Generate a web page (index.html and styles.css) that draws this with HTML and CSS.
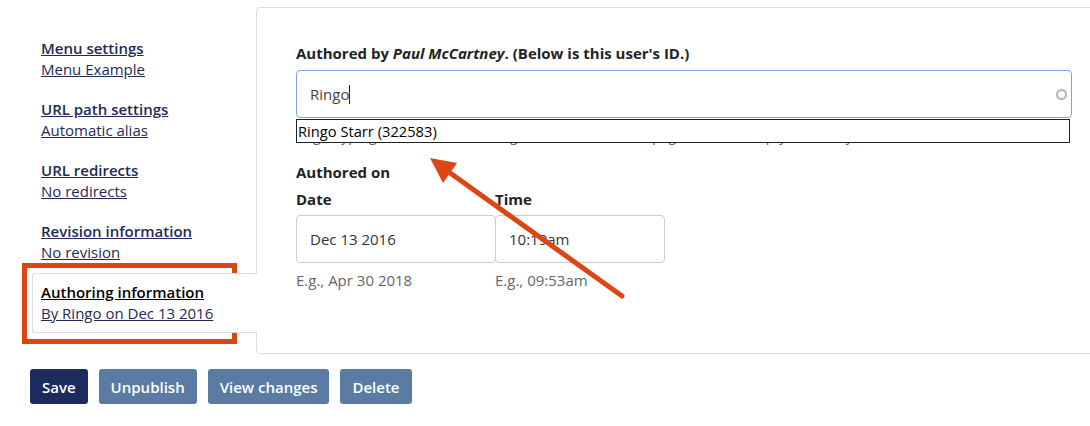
FILE: index.html
```html
<!DOCTYPE html>
<html lang="en">
<head>
    <meta charset="UTF-8">
    <title>Edit content - Authoring information</title>
    <link rel="stylesheet" href="styles.css">
</head>
<body>
    <div class="page">
        <div class="edit-layout">
            <!-- vertical tabs -->
            <ul class="vertical-tabs">
                <li class="tab">
                    <a class="tab-title" href="#">Menu settings</a>
                    <a class="tab-summary" href="#">Menu Example</a>
                </li>
                <li class="tab">
                    <a class="tab-title" href="#">URL path settings</a>
                    <a class="tab-summary" href="#">Automatic alias</a>
                </li>
                <li class="tab">
                    <a class="tab-title" href="#">URL redirects</a>
                    <a class="tab-summary" href="#">No redirects</a>
                </li>
                <li class="tab">
                    <a class="tab-title" href="#">Revision information</a>
                    <a class="tab-summary" href="#">No revision</a>
                </li>
                <li class="tab active">
                    <a class="tab-title" href="#">Authoring information</a>
                    <a class="tab-summary" href="#">By Ringo on Dec 13 2016</a>
                </li>
            </ul>

            <!-- tab pane -->
            <div class="panel">
                <div class="form-item">
                    <label class="form-label">Authored by <em>Paul McCartney</em>. (Below is this user's ID.)</label>
                    <div class="autocomplete-wrap">
                        <div class="text-input focused">
                            <span>Ringo</span><span class="caret"></span>
                            <span class="throbber"></span>
                        </div>
                        <div class="autocomplete">Ringo Starr (322583)</div>
                    </div>
                    <div class="description">Begin typing a username to change who authored this page. Leave it empty for anonymous.</div>
                </div>

                <div class="form-item">
                    <div class="legend">Authored on</div>
                    <div class="datetime">
                        <div class="datetime-part date-part">
                            <label class="form-label">Date</label>
                            <div class="text-input">Dec 13 2016</div>
                            <div class="example">E.g., Apr 30 2018</div>
                        </div>
                        <div class="datetime-part time-part">
                            <label class="form-label">Time</label>
                            <div class="text-input">10:19am</div>
                            <div class="example">E.g., 09:53am</div>
                        </div>
                    </div>
                </div>
            </div>
        </div>

        <div class="form-actions">
            <button class="btn primary">Save</button>
            <button class="btn">Unpublish</button>
            <button class="btn">View changes</button>
            <button class="btn">Delete</button>
        </div>

        <!-- annotation -->
        <div class="highlight-box"></div>
        <svg class="annotation" width="1090" height="426" viewBox="0 0 1090 426">
            <line x1="622" y1="296" x2="446" y2="170" stroke="#dc4514" stroke-width="5" stroke-linecap="round"/>
            <polygon points="430,158 457,163 443,183" fill="#dc4514"/>
        </svg>
    </div>
</body>
</html>
```

FILE: styles.css
```css
* {
    margin: 0;
    padding: 0;
    box-sizing: border-box;
}

body {
    font-family: "Open Sans", "Liberation Sans", sans-serif;
    font-size: 15px;
    color: #232323;
    background: #fff;
}

.page {
    position: relative;
    height: 426px;
    padding: 7px 0 0 32px;
    overflow: hidden;
}

.edit-layout {
    display: flex;
}

/* vertical tabs */
.vertical-tabs {
    width: 224px;
    flex-shrink: 0;
    padding-top: 22px;
    list-style: none;
}

.tab {
    padding: 8px;
    margin-bottom: 1px;
    border: 1px solid transparent;
    line-height: 21px;
}

.tab.active {
    position: relative;
    z-index: 1;
    margin-right: -1px;
    background: #fff;
    border-color: #ddd;
    border-right: none;
    border-radius: 3px 0 0 3px;
}

.tab-title,
.tab-summary {
    display: block;
    width: max-content;
    color: #1f2a56;
    text-decoration: underline;
}

.tab-title {
    font-weight: 600;
}

.tab.active .tab-title {
    color: #000;
}

/* pane */
.panel {
    flex: 1;
    height: 347px;
    margin-right: -20px;
    padding: 35px 37px 0 39px;
    border: 1px solid #ddd;
    border-radius: 4px;
}

.form-label {
    display: block;
    font-weight: 700;
    line-height: 21px;
    margin-bottom: 6px;
}

.form-label em {
    font-style: italic;
}

.autocomplete-wrap {
    position: relative;
}

.text-input {
    display: flex;
    align-items: center;
    height: 48px;
    padding: 0 13px;
    border: 1px solid #ccc;
    border-radius: 4px;
    color: #444;
    background: #fff;
}

.text-input.focused {
    border-color: #7ba5e6;
    padding-right: 4px;
}

.caret {
    display: inline-block;
    width: 1px;
    height: 19px;
    background: #222;
}

.throbber {
    width: 11px;
    height: 11px;
    margin-left: auto;
    border: 2px solid #b4b4b4;
    border-radius: 50%;
}

.autocomplete {
    position: absolute;
    top: 49px;
    left: 0;
    right: 2px;
    height: 24px;
    padding-left: 1px;
    border: 1px solid #222;
    background: #fff;
    color: #000;
    font-size: 14.7px;
    line-height: 22px;
}

.description {
    margin-top: 8px;
    font-size: 14px;
    line-height: 20px;
    color: #666;
}

.legend {
    margin-top: 16px;
    font-weight: 700;
    line-height: 21px;
    margin-bottom: 6px;
}

.datetime {
    display: flex;
}

.date-part {
    width: 200px;
}

.time-part {
    width: 170px;
    margin-left: -1px;
}

.datetime-part .form-label {
    margin-bottom: 5px;
}

.datetime-part .text-input {
    color: #333;
}

.example {
    margin-top: 7px;
    font-size: 15px;
    line-height: 21px;
    color: #666;
}

/* buttons */
.form-actions {
    display: flex;
    gap: 11px;
    margin: 15px 0 0 -2px;
}

.btn {
    height: 35px;
    padding: 0 12px;
    border: none;
    border-radius: 3px;
    background: #5a7ba3;
    color: #fff;
    font-family: inherit;
    font-size: 15px;
    font-weight: 600;
}

.btn.primary {
    background: #1d2a5e;
}

/* annotation overlay */
.highlight-box {
    position: absolute;
    left: 22px;
    top: 263px;
    width: 215px;
    height: 81px;
    border: 5px solid #dc4514;
}

.annotation {
    position: absolute;
    left: 0;
    top: 0;
    pointer-events: none;
}
```
